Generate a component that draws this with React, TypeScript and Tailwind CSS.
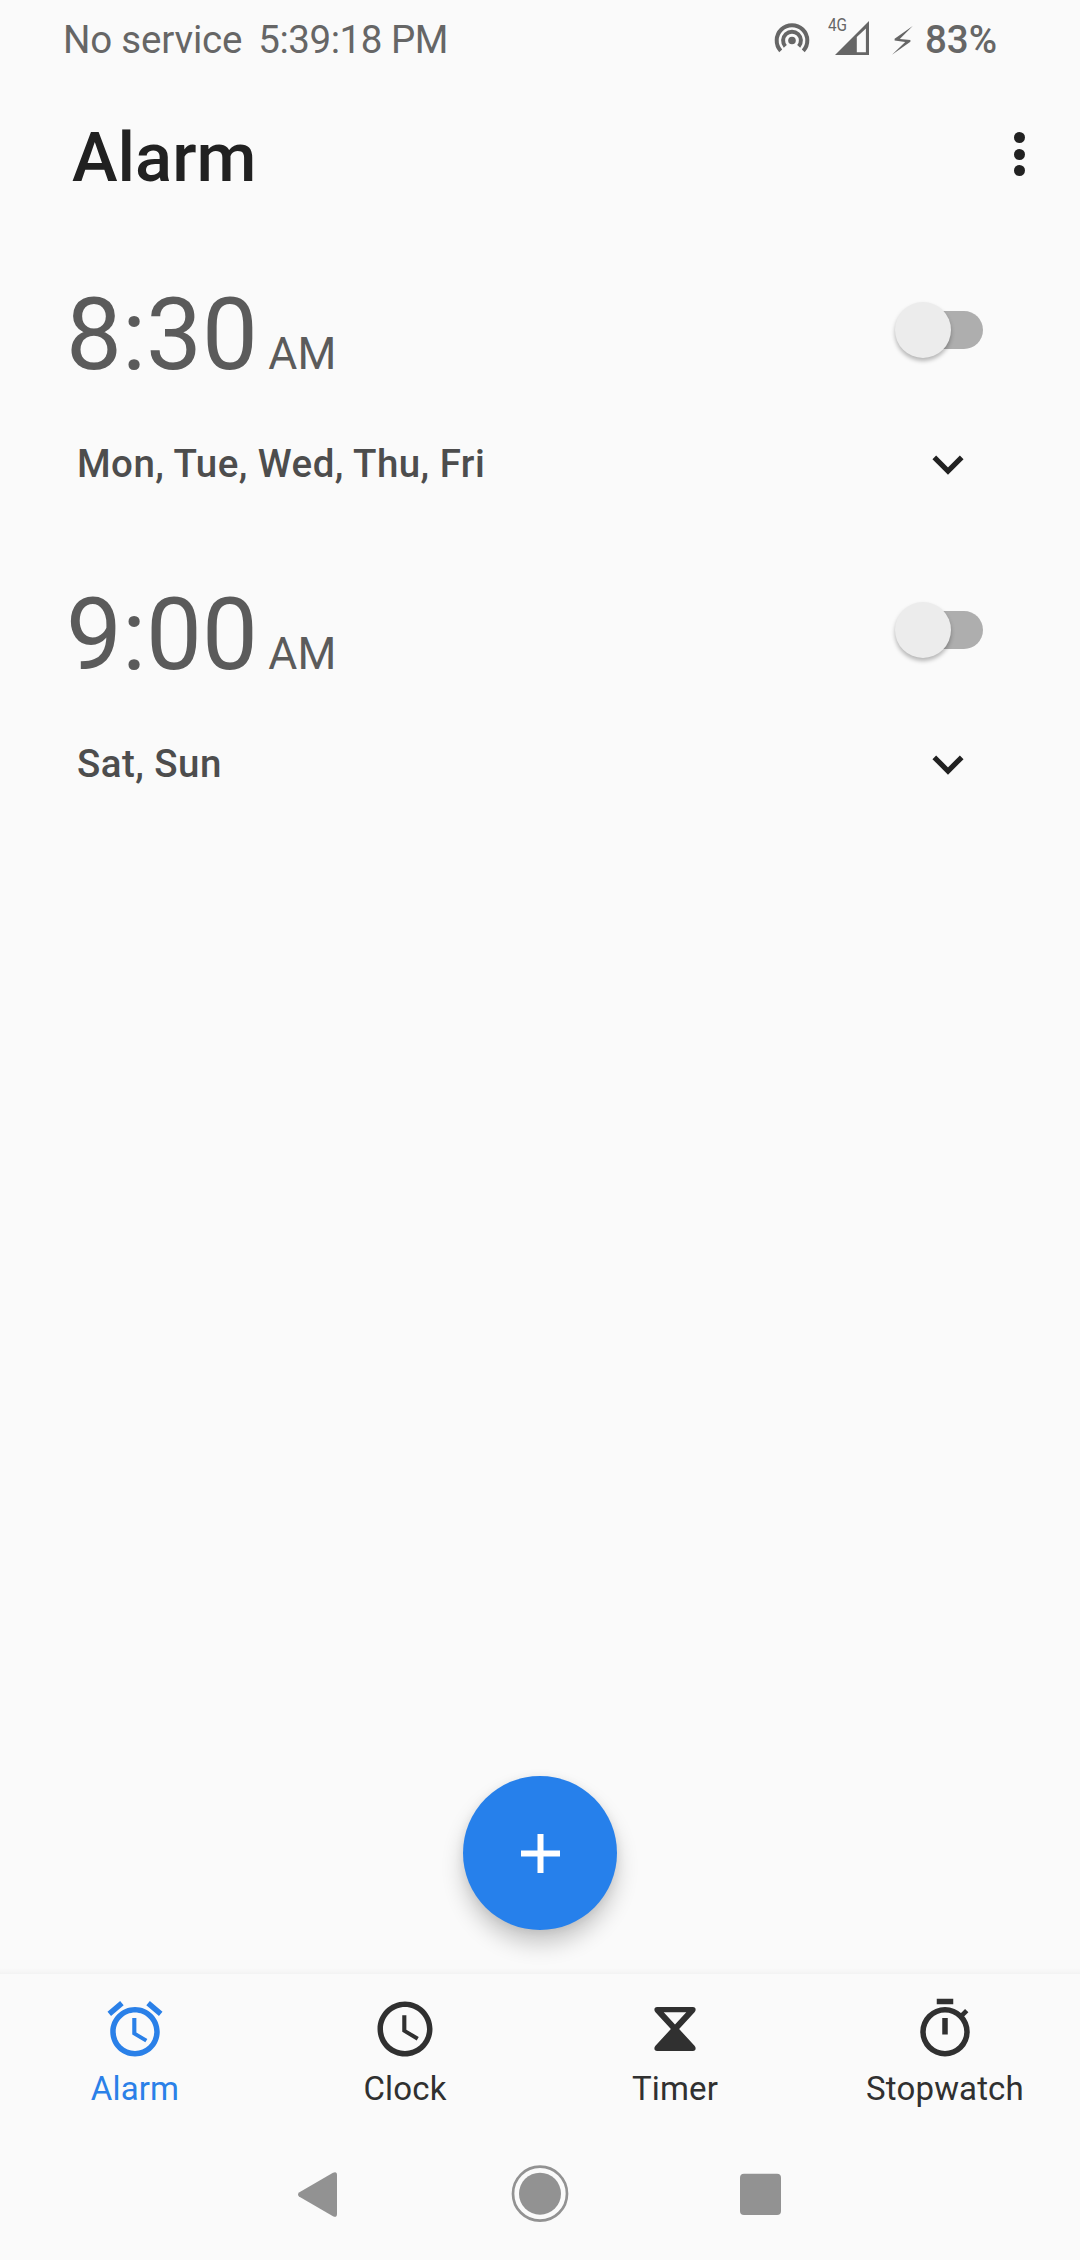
import React from "react";

function Toggle() {
  return (
    <div className="relative h-[38px] w-[72px] rounded-full bg-[#aeaeae]">
      <div className="absolute -left-[16px] -top-[9px] size-[56px] rounded-full bg-[#ececec] shadow-[0_3px_4px_rgba(0,0,0,0.28)]" />
    </div>
  );
}

function AlarmRow({ time, days }: { time: string; days: string }) {
  return (
    <section className="flex h-[300px] flex-col pl-[66px] pr-[97px]">
      <div className="flex h-[151px] items-end justify-between">
        <div className="flex items-baseline text-[#5b5b5b]">
          <span className="text-[99.5px] leading-[118px]">{time}</span>
          <span className="ml-[10.5px] text-[44.5px]">AM</span>
        </div>
        <div className="mb-[45px]">
          <Toggle />
        </div>
      </div>
      <div className="mt-[46px] flex h-[48px] items-center justify-between pl-[11px] pr-[19px]">
        <span className="text-[38.5px] font-medium tracking-[0.45px] text-[#4d4d4d]">{days}</span>
        <svg width="32" height="20" viewBox="0 0 32 20" className="mt-[1px]">
          <path d="M2.3 2.3L16 16L29.7 2.3" fill="none" stroke="#212121" strokeWidth="5.2" />
        </svg>
      </div>
    </section>
  );
}

const tabs = [
  {
    label: "Alarm",
    active: true,
    paths: [
      "M22 5.72l-4.6-3.86-1.29 1.53 4.6 3.86L22 5.72zM7.88 3.39L6.6 1.86 2 5.71l1.29 1.53 4.59-3.85zM12.5 8H11v6l4.75 2.85.75-1.23-4-2.37V8zM12 4c-4.97 0-9 4.03-9 9s4.02 9 9 9c4.97 0 9-4.03 9-9s-4.03-9-9-9zm0 16c-3.87 0-7-3.13-7-7s3.13-7 7-7 7 3.13 7 7-3.13 7-7 7z",
    ],
  },
  {
    label: "Clock",
    paths: [
      "M11.99 2C6.47 2 2 6.48 2 12s4.47 10 9.99 10C17.52 22 22 17.52 22 12S17.52 2 11.99 2zM12 20c-4.42 0-8-3.58-8-8s3.58-8 8-8 8 3.58 8 8-3.58 8-8 8zm.5-13H11v6l5.25 3.15.75-1.23-4.5-2.67z",
    ],
  },
  {
    label: "Timer",
    paths: [
      "M5.5 4H18.5Q19.5 4 19.5 5Q19.5 5.5 19.1 5.9L13.5 12L19.1 18.1Q19.5 18.5 19.5 19Q19.5 20 18.5 20H5.5Q4.5 20 4.5 19Q4.5 18.5 4.9 18.1L10.5 12L4.9 5.9Q4.5 5.5 4.5 5Q4.5 4 5.5 4ZM7.9 5.9L12 10.4L16.1 5.9Z",
    ],
  },
  {
    label: "Stopwatch",
    paths: [
      "M15 1H9v2h6zM11 8h2v6h-2zM12 4a9 9 0 1 0 0 18a9 9 0 0 0 0-18zM12 6a7 7 0 1 1 0 14a7 7 0 0 1 0-14z",
      "M17 7L19.3 4.7L20.5 5.9L18.2 8.2z",
    ],
  },
];

export default function App() {
  return (
    <main className="flex h-[2260px] w-[1080px] flex-col overflow-hidden bg-[#fafafa] font-['Roboto',sans-serif]">
      <header className="flex h-[80px] items-center justify-between pl-[63px] pr-[83px] text-[38.5px] leading-[46px] text-[#666]">
        <div className="flex gap-[16px]">
          <span className="tracking-[-0.2px]">No service</span>
          <span className="tracking-[-0.45px]">5:39:18 PM</span>
        </div>
        <div className="flex items-center">
          <svg width="36" height="36" viewBox="0 0 36 36" fill="none" stroke="#666" strokeWidth="4">
            <circle cx="18" cy="18.5" r="3.8" fill="#666" stroke="none" />
            <path d="M6.7 28.8A15.3 15.3 0 1 1 29.3 28.8M11.3 24.4A8.9 8.9 0 1 1 24.7 24.4" />
          </svg>
          <span className="-mt-[31px] ml-[18px] w-[19px] origin-left scale-x-[0.82] text-[18.7px]">4G</span>
          <svg width="34" height="34" viewBox="0 0 34 34" className="-ml-[12px] -mt-[4px]">
            <path fillRule="evenodd" fill="#666" d="M0 34L34 0V34ZM21.8 16V31.2H30.9V7.5Z" />
          </svg>
          <svg width="21" height="29" viewBox="0 0 21 29" className="ml-[23px]">
            <path fill="#666" d="M20.7 0L2.6 12.8L2.6 14.6L13.2 15.9L0 28.7L18.4 15.8L18.4 14L7.8 12.9Z" />
          </svg>
          <span className="ml-[12px] font-medium">83%</span>
        </div>
      </header>

      <div className="flex h-[163px] items-start justify-between pl-[72px] pr-[55px]">
        <h1 className="mt-[38px] text-[68.75px] font-medium leading-[80px] text-[#212121]">Alarm</h1>
        <div className="mt-[52px] flex flex-col gap-[5.5px]">
          <i className="size-[11px] rounded-full bg-[#212121]" />
          <i className="size-[11px] rounded-full bg-[#212121]" />
          <i className="size-[11px] rounded-full bg-[#212121]" />
        </div>
      </div>

      <div className="flex-1">
        <AlarmRow time="8:30" days="Mon, Tue, Wed, Thu, Fri" />
        <AlarmRow time="9:00" days="Sat, Sun" />
      </div>

      <div className="mb-[38px] flex justify-center">
        <button className="flex size-[154px] items-center justify-center rounded-full bg-[#2680eb] shadow-[0_14px_22px_rgba(0,0,0,0.2),0_2px_10px_rgba(0,0,0,0.08)]">
          <svg width="39" height="39" viewBox="0 0 39 39">
            <path d="M19.5 0V39M0 19.5H39" stroke="#fff" strokeWidth="6" />
          </svg>
        </button>
      </div>

      <div className="h-[6px] bg-linear-to-b from-black/0 to-black/3" />
      <nav className="grid h-[156px] grid-cols-4 bg-[#fafafa] pt-[22px]">
        {tabs.map((t) => (
          <div
            key={t.label}
            className={
              t.active
                ? "flex flex-col items-center text-[#2a80e8]"
                : "flex flex-col items-center text-[#303030]"
            }
          >
            <svg width="66" height="66" viewBox="0 0 24 24" fill="currentColor" fillRule="evenodd">
              {t.paths.map((d) => (
                <path key={d} d={d} />
              ))}
            </svg>
            <span className="mt-[7px] text-[33px] leading-[40px] tracking-[0.15px]">{t.label}</span>
          </div>
        ))}
      </nav>

      <footer className="flex h-[130px] items-start pl-[297px] pt-[25px]">
        <svg width="486" height="80" viewBox="0 0 486 80" fill="#929292">
          <path d="M2 37.5L36 17.7Q40 16 40 20V59Q40 63 36 61.3L2 41.5Q0 39.5 2 37.5Z" />
          <circle cx="243" cy="38.7" r="27" fill="none" stroke="#929292" strokeWidth="2.7" />
          <circle cx="243" cy="38.7" r="21" />
          <rect x="443" y="18.8" width="41" height="41.2" rx="4" />
        </svg>
      </footer>
    </main>
  );
}
